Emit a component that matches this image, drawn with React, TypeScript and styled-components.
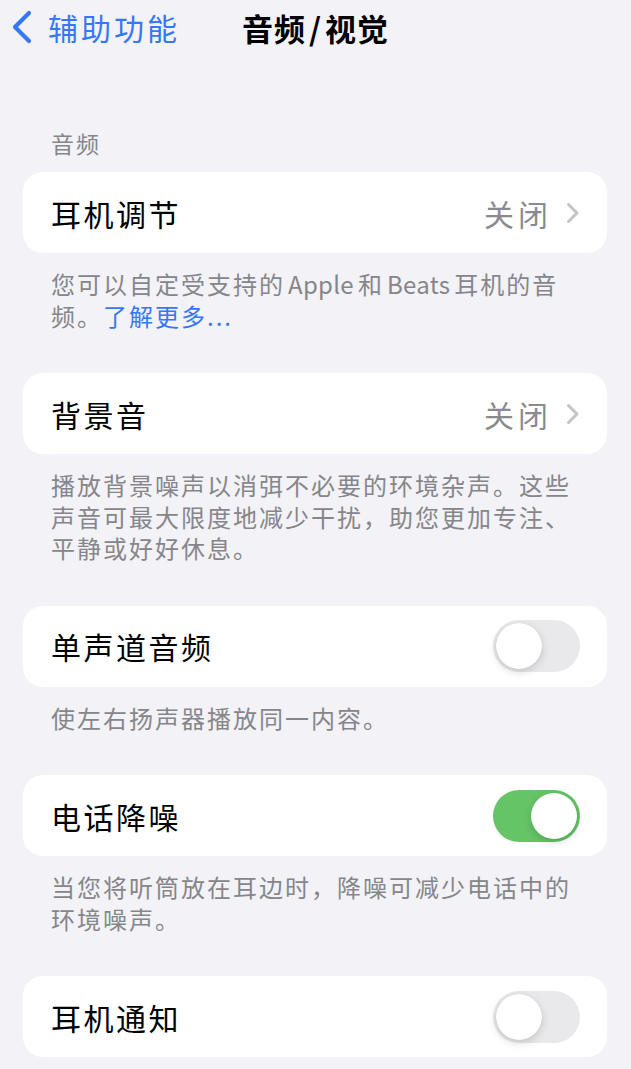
import React from "react";
import styled, { createGlobalStyle } from "styled-components";

const GlobalStyle = createGlobalStyle`
  html, body {
    margin: 0;
    padding: 0;
    background: #f2f2f7;
  }
  body {
    font-family: "Noto Sans CJK SC", "Noto Sans", "Liberation Sans", sans-serif;
    -webkit-font-smoothing: antialiased;
  }
`;

const Screen = styled.div`
  width: 631px;
  min-height: 1069px;
  background: #f2f2f7;
  overflow: hidden;
`;

const NavBar = styled.header`
  position: relative;
  height: 54px;
  display: flex;
  align-items: center;
`;

const BackButton = styled.button`
  display: flex;
  align-items: center;
  gap: 15px;
  padding: 0 0 0 11px;
  border: 0;
  background: none;
  color: #3478f6;
  font-family: inherit;
  font-size: 30px;
  letter-spacing: 3px;
  line-height: 1;
  cursor: pointer;
`;

const NavTitle = styled.h1`
  position: absolute;
  left: 0;
  right: 0;
  top: 0;
  height: 54px;
  margin: 0;
  display: flex;
  align-items: center;
  justify-content: center;
  font-size: 31px;
  font-weight: 700;
  letter-spacing: 1px;
  color: #000;
  pointer-events: none;
`;

const Slash = styled.span`
  margin: 0 3px;
`;

const Content = styled.main`
  padding: 73px 24px 0 23px;
`;

const SectionHeader = styled.div`
  padding-left: 28px;
  margin-bottom: 13px;
  font-size: 23px;
  line-height: 32px;
  letter-spacing: 2px;
  color: #86868a;
`;

const Card = styled.div`
  height: 81px;
  background: #fff;
  border-radius: 20px;
  display: flex;
  align-items: center;
  padding: 0 27px 0 28px;
`;

const Label = styled.span`
  flex: 1;
  font-size: 30px;
  letter-spacing: 2.5px;
  color: #000;
`;

const Value = styled.span`
  font-size: 30px;
  letter-spacing: 4px;
  color: #8a8a8e;
  margin-right: 14px;
`;

const Footer = styled.p`
  margin: 0;
  padding: 15px 28px 42px 28px;
  font-size: 24px;
  line-height: 31.5px;
  letter-spacing: 2px;
  color: #86868a;
`;

const Latin = styled.span`
  letter-spacing: 0.3px;
  margin: 0 4px 0 3px;
`;

const Link = styled.a`
  color: #3478f6;
  text-decoration: none;
`;

const Track = styled.div<{ $on: boolean }>`
  position: relative;
  width: 87px;
  height: 52px;
  border-radius: 26px;
  background: ${(p) => (p.$on ? "#65c466" : "#e9e9eb")};
`;

const Knob = styled.div<{ $on: boolean }>`
  position: absolute;
  top: 3px;
  left: ${(p) => (p.$on ? "38px" : "3px")};
  width: 46px;
  height: 46px;
  border-radius: 50%;
  background: #fff;
  box-shadow: 0 3px 8px rgba(0, 0, 0, 0.15), 0 0 1px rgba(0, 0, 0, 0.16);
`;

const Chevron = () => (
  <svg width="14" height="22" viewBox="0 0 14 22">
    <path
      d="M2.5 2.5 L11 11 L2.5 19.5"
      fill="none"
      stroke="#c4c4c7"
      strokeWidth="3"
      strokeLinecap="round"
      strokeLinejoin="round"
    />
  </svg>
);

const BackChevron = () => (
  <svg width="22" height="34" viewBox="0 0 22 34">
    <path
      d="M18 3 L4 17 L18 31"
      fill="none"
      stroke="#3478f6"
      strokeWidth="4.2"
      strokeLinecap="round"
      strokeLinejoin="round"
    />
  </svg>
);

const Toggle = ({ on }: { on: boolean }) => (
  <Track $on={on}>
    <Knob $on={on} />
  </Track>
);

export default function App() {
  return (
    <Screen>
      <GlobalStyle />
      <NavBar>
        <BackButton>
          <BackChevron />
          辅助功能
        </BackButton>
        <NavTitle>
          音频<Slash>/</Slash>视觉
        </NavTitle>
      </NavBar>
      <Content>
        <SectionHeader>音频</SectionHeader>
        <Card>
          <Label>耳机调节</Label>
          <Value>关闭</Value>
          <Chevron />
        </Card>
        <Footer>
          您可以自定受支持的<Latin>Apple</Latin>和<Latin>Beats</Latin>耳机的音频。
          <Link>了解更多...</Link>
        </Footer>

        <Card>
          <Label>背景音</Label>
          <Value>关闭</Value>
          <Chevron />
        </Card>
        <Footer>
          播放背景噪声以消弭不必要的环境杂声。这些声音可最大限度地减少干扰，助您更加专注、平静或好好休息。
        </Footer>

        <Card>
          <Label>单声道音频</Label>
          <Toggle on={false} />
        </Card>
        <Footer>使左右扬声器播放同一内容。</Footer>

        <Card>
          <Label>电话降噪</Label>
          <Toggle on={true} />
        </Card>
        <Footer>当您将听筒放在耳边时，降噪可减少电话中的环境噪声。</Footer>

        <Card>
          <Label>耳机通知</Label>
          <Toggle on={false} />
        </Card>
      </Content>
    </Screen>
  );
}
